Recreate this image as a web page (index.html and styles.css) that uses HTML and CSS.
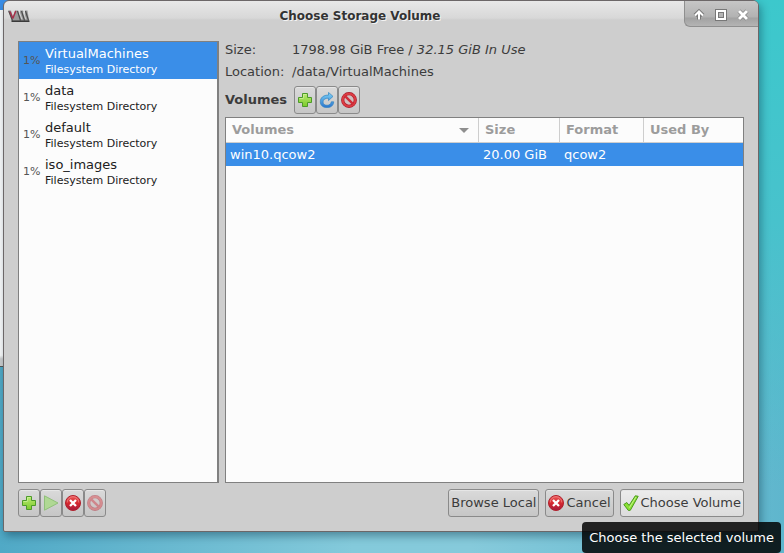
FILE: index.html
```html
<!DOCTYPE html>
<html lang="en">
<head>
<meta charset="utf-8">
<title>Choose Storage Volume</title>
<link rel="stylesheet" href="styles.css">
</head>
<body>
<svg class="defs" aria-hidden="true">
  <defs>
    <linearGradient id="green" x1="0" y1="0" x2="0" y2="1"><stop offset="0" stop-color="#b9ea72"/><stop offset="1" stop-color="#7ccb2c"/></linearGradient>
    <linearGradient id="red" x1="0" y1="0" x2="0" y2="1"><stop offset="0" stop-color="#ec5a5a"/><stop offset=".5" stop-color="#d6292f"/><stop offset="1" stop-color="#a61a3c"/></linearGradient>
    <linearGradient id="blue" x1="0" y1="0" x2="0" y2="1"><stop offset="0" stop-color="#7fd4f6"/><stop offset="1" stop-color="#2a74cf"/></linearGradient>
    <symbol id="add" viewBox="0 0 16 16"><path d="M5.500 1.500h5v4h4v5h-4v4h-5v-4h-4v-5h4z" fill="url(#green)" stroke="#4d9a2a"/><path d="M6.500 5.800v-3.300h3M2.500 6.500h4" fill="none" stroke="#d2f3a0" opacity=".7"/></symbol>
    <symbol id="play" viewBox="0 0 16 16"><path d="M1.500 .8v14.400L15 8z" fill="#b0d894" stroke="#90c07a" stroke-linejoin="round"/></symbol>
    <symbol id="stop" viewBox="0 0 16 16"><circle cx="8" cy="8" r="7.500" fill="url(#red)" stroke="#b0202c"/><path d="M2.200 7.500a5.800 5.800 0 0 1 11.600 0" fill="none" stroke="#f49a9a" opacity=".6"/><path d="M5 5l6 6M11 5l-6 6" stroke="#fff" stroke-width="2.300"/></symbol>
    <symbol id="ban" viewBox="0 0 16 16"><circle cx="8" cy="8" r="6.300" fill="#d2c0c0" stroke="#a81a2c" stroke-width="3.200"/><circle cx="8" cy="8" r="6.300" fill="none" stroke="#dc3c42" stroke-width="2"/><path d="M3.800 3.800l8.400 8.400" stroke="#cf2c38" stroke-width="2.400"/></symbol>
    <symbol id="refresh" viewBox="0 0 16 16"><path d="M9.500 .4l4.500 4-4.500 4.200V6.200C6.300 6 4 7.600 4 10c0 2 1.700 3.300 4 3.300S12 12 12.300 9.800h2.400c-.2 3.800-2.800 5.800-6.700 5.800-4 0-6.700-2.300-6.700-5.800 0-4.200 3.300-6.800 8.200-6.700z" fill="url(#blue)" stroke="#3484bf" stroke-width=".7" stroke-linejoin="round"/></symbol>
    <symbol id="check" viewBox="0 0 16 16"><path d="M.8 9.500l3-2 2.300 2.900L12.300.8l2.900.5L7.300 15.300l-2 .1z" fill="#8ae234" stroke="#4b9a1d" stroke-linejoin="round"/><path d="M6.300 12.700L13 2" stroke="#c4f28a"/></symbol>
  </defs>
</svg>
<div class="back-window"></div>
<main class="dialog">
  <header class="titlebar">
    <svg class="logo" viewBox="0 0 22 12" aria-hidden="true">
      <path d="M0 .5h3l2 6 2-6h3l2 6V.5h3l2 6V.5h2.500L21 10v1.500H4z" fill="#9b9b9b"/>
      <path d="M.8 1l3.700 9.500M9.500 1l3 9.500M13.500 1l3 9.500M17.500 1l3 9.500" stroke="#4c4c4c" stroke-width="1.200"/>
      <path d="M11.300 2l2.500 7M15.300 2l2.500 7" stroke="#d4d4d4"/>
      <path d="M4.800 8.500L7.800 1M2 1.500l2.800 7" fill="none" stroke="#a8304a" stroke-width="1.500"/>
      <path d="M3.500 11.200h18" stroke="#2c2c2c" stroke-width="1.400"/>
    </svg>
    <h1>Choose Storage Volume</h1>
    <div class="window-controls">
      <button type="button" aria-label="Shade"><svg viewBox="0 0 12 12"><path d="M6 10.500V3M2 6.500l4-4 4 4" class="halo"/><path d="M6 10.500V3M2 6.500l4-4 4 4" class="mark"/></svg></button>
      <button type="button" aria-label="Maximize"><svg viewBox="0 0 12 12"><path d="M2 2h8v8H2z" class="halo"/><path d="M2 2h8v8H2z" class="mark"/></svg></button>
      <button type="button" aria-label="Close"><svg viewBox="0 0 12 12"><path d="M2 2l8 8M10 2l-8 8" class="halo"/><path d="M2 2l8 8M10 2l-8 8" class="mark thick"/></svg></button>
    </div>
  </header>
  <div class="content">
    <section class="pools">
      <ul class="pool-list">
        <li class="selected"><span class="usage">1%</span><div><strong>VirtualMachines</strong><small>Filesystem Directory</small></div></li>
        <li><span class="usage">1%</span><div><strong>data</strong><small>Filesystem Directory</small></div></li>
        <li><span class="usage">1%</span><div><strong>default</strong><small>Filesystem Directory</small></div></li>
        <li><span class="usage">1%</span><div><strong>iso_images</strong><small>Filesystem Directory</small></div></li>
      </ul>
      <div class="toolbar">
        <button type="button" class="btn" aria-label="Add pool"><svg><use href="#add"/></svg></button>
        <button type="button" class="btn" aria-label="Start pool" disabled><svg><use href="#play"/></svg></button>
        <button type="button" class="btn" aria-label="Stop pool"><svg><use href="#stop"/></svg></button>
        <button type="button" class="btn faded" aria-label="Delete pool" disabled><svg><use href="#ban"/></svg></button>
      </div>
    </section>
    <section class="volumes">
      <dl class="details">
        <dt>Size:</dt><dd>1798.98 GiB Free / <em>32.15 GiB In Use</em></dd>
        <dt>Location:</dt><dd>/data/VirtualMachines</dd>
      </dl>
      <div class="volume-bar">
        <h2>Volumes</h2>
        <div class="toolbar">
          <button type="button" class="btn" aria-label="New volume"><svg><use href="#add"/></svg></button>
          <button type="button" class="btn" aria-label="Refresh volumes"><svg><use href="#refresh"/></svg></button>
          <button type="button" class="btn" aria-label="Delete volume"><svg><use href="#ban"/></svg></button>
        </div>
      </div>
      <div class="table-frame">
        <table>
          <colgroup><col><col class="col-size"><col class="col-format"><col class="col-used"></colgroup>
          <thead><tr><th><span class="sorted">Volumes</span></th><th>Size</th><th>Format</th><th>Used By</th></tr></thead>
          <tbody><tr class="selected"><td>win10.qcow2</td><td>20.00 GiB</td><td>qcow2</td><td></td></tr></tbody>
        </table>
      </div>
      <footer class="actions">
        <button type="button" class="btn text">Browse Local</button>
        <button type="button" class="btn text"><svg><use href="#stop"/></svg>Cancel</button>
        <button type="button" class="btn text hover"><svg><use href="#check"/></svg>Choose Volume</button>
      </footer>
    </section>
  </div>
</main>
<div class="tooltip" role="tooltip">Choose the selected volume</div>
</body>
</html>
```
FILE: styles.css
```css
* { box-sizing: border-box; }

body {
  margin: 0;
  height: 100vh;
  padding: 0 25px 21px 3px;
  overflow: hidden;
  position: relative;
  font: 13px/16px "DejaVu Sans", sans-serif;
  color: #3c3c3c;
  background:
    linear-gradient(to bottom, #3cc8cc 0%, #48c2cc 40%, transparent 88%) right / 30px 100% no-repeat,
    linear-gradient(to right, #50a9c6 0%, #84cadb 45%, #86cadb 60%, #5fb6cd 100%);
}

button { font: inherit; color: inherit; }
.defs { position: absolute; width: 0; height: 0; }

.back-window {
  position: absolute;
  left: 0;
  top: 0;
  width: 12px;
  height: 367px;
  border-top: 10px solid #3a8ee8;
  border-bottom: 1px solid #555;
  background: linear-gradient(#fcfcfc 97%, #cecece 98%);
}

.dialog {
  position: relative;
  height: 100%;
  display: flex;
  flex-direction: column;
  border: 1px solid #6c6768;
  border-radius: 6px 6px 2px 2px;
  background: linear-gradient(#e8e8e8, #d8d8d8 17px, #cecece 19px);
  box-shadow: 2px 4px 8px rgba(0, 40, 60, .4);
}

.titlebar {
  height: 26px;
  flex: none;
  display: flex;
  align-items: flex-start;
  padding-left: 4px;
}
.logo { width: 22px; height: 12px; margin-top: 9px; }
.titlebar h1 {
  flex: 1;
  margin: 7px 0 0;
  padding-left: 6px;
  text-align: center;
  font-size: 12px;
  line-height: 16px;
  color: #333;
  text-shadow: 1px 1px 0 #f4f4f4;
}
.window-controls {
  display: flex;
  gap: 6px;
  padding: 0 7px 0 6px;
  height: 26px;
  align-items: center;
  border: solid #8f8f8f;
  border-width: 0 0 1px 1px;
  border-radius: 0 5px 0 6px;
  background: linear-gradient(#c6c6c6, #b2b2b2 16px, #a2a2a2 17px, #b4b4b4);
}
.window-controls button {
  width: 16px;
  height: 16px;
  padding: 0;
  border: 0;
  background: none;
  display: grid;
  place-items: center;
}
.window-controls svg { width: 12px; height: 12px; overflow: visible; margin-top: 2px; }
.halo, .mark { fill: none; }
.halo { stroke: #777; stroke-width: 4; }
.mark { stroke: #fff; stroke-width: 2; }
.thick { stroke-width: 3; }

.content {
  flex: 1;
  min-height: 0;
  display: grid;
  grid-template-columns: 201px 1fr;
  gap: 6px;
  padding: 14px;
}
.pools, .volumes { display: flex; flex-direction: column; min-width: 0; }

.pool-list {
  flex: 1;
  margin: 0 0 6px;
  padding: 0;
  list-style: none;
  border: 1px solid #808080;
  border-right-width: 2px;
  background: #fcfcfc;
}
.pool-list li {
  display: flex;
  align-items: center;
  gap: 4px;
  height: 37px;
  padding-left: 4px;
  color: #212121;
}
.usage { width: 18px; font-size: 11px; color: #555; }
.pool-list li div { padding-top: 2px; }
.pool-list strong { display: block; font-weight: normal; }
.pool-list small { display: block; font-size: 11px; }
.pool-list .selected, .selected td { background: #3a8ee8; color: #fff; }

.toolbar { display: flex; }
.btn {
  width: 22px;
  height: 28px;
  padding: 0;
  display: flex;
  align-items: center;
  justify-content: center;
  border: 1px solid #8a8a8a;
  border-radius: 3px;
  background: linear-gradient(#dadada, #c6c6c6);
  box-shadow: inset 0 1px 0 #e6e6e6;
}
.btn svg { width: 16px; height: 16px; flex: none; }
.faded svg { opacity: .45; }

.details {
  margin: 0;
  padding-top: 1px;
  display: grid;
  grid-template-columns: 67px 1fr;
  row-gap: 6px;
}
.details dd { margin: 0; }
.volume-bar { display: flex; align-items: center; gap: 7px; margin: 6px 0 3px; }
.volume-bar h2 { margin: 0; font-size: 13px; }

.table-frame { flex: 1; border: 1px solid #808080; background: #fcfcfc; }
table { width: 100%; table-layout: fixed; border-collapse: separate; border-spacing: 0; }
.col-size { width: 81px; }
.col-format { width: 84px; }
.col-used { width: 99px; }
th {
  height: 25px;
  padding: 0 6px;
  text-align: left;
  color: #9c9c9c;
  border: solid #cecece;
  border-width: 0 1px 1px 0;
}
th:last-child { border-right: 0; }
.sorted { display: flex; align-items: center; justify-content: space-between; padding-right: 3px; }
.sorted::after {
  content: "";
  border: 5px solid transparent;
  border-top-color: #8f8f8f;
  border-bottom: 0;
}
td { height: 23px; padding: 0 4px; }

.actions { display: flex; justify-content: flex-end; gap: 6px; margin-top: 6px; }
.btn.text { width: auto; padding: 0 2px; gap: 2px; white-space: nowrap; }
.btn.hover { background: linear-gradient(#ececec, #dcdcdc); }

.tooltip {
  position: absolute;
  right: 3px;
  bottom: 0;
  padding: 8px 7px 7px;
  border-radius: 4px;
  color: #fff;
  background: rgba(0, 0, 0, .84);
}
```
